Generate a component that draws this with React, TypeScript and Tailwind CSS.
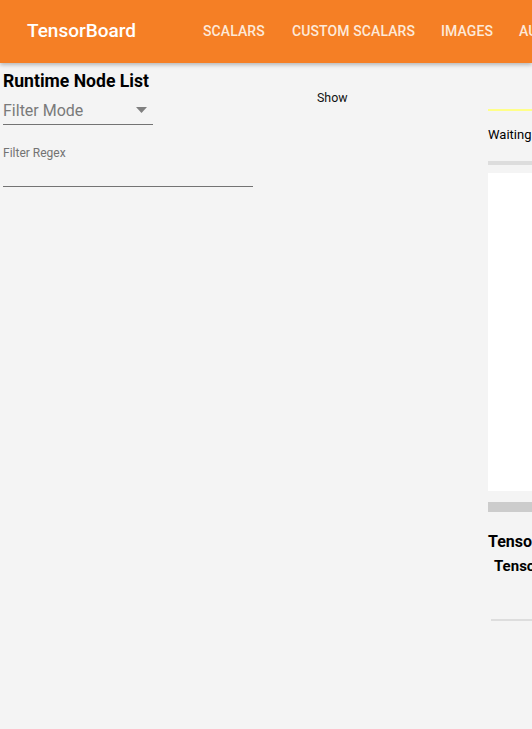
import React from "react";

export default function App() {
  return (
    <div className="w-[532px] h-[729px] overflow-hidden bg-[#f4f4f4]" style={{ fontFamily: "Roboto, 'Liberation Sans', sans-serif" }}>
      <header className="relative z-10 h-[63px] bg-[#f57f25] flex items-center shadow-[0_2px_4px_rgba(0,0,0,0.25)] whitespace-nowrap overflow-hidden">
        <div className="pl-[27px] text-white text-[19px] font-medium w-[203px] shrink-0">TensorBoard</div>
        <nav className="flex text-[14px] font-medium text-[#fde9d9] tracking-[0.1px]">
          <span className="w-[89px] shrink-0">SCALARS</span>
          <span className="w-[149px] shrink-0">CUSTOM SCALARS</span>
          <span className="w-[78px] shrink-0">IMAGES</span>
          <span className="shrink-0">AUDIO</span>
        </nav>
      </header>
      <div className="flex">
        <div className="w-[270px] shrink-0 pl-[3px] pt-[8px]">
          <div className="text-[17.6px] font-bold text-black leading-[20px]">Runtime Node List</div>
          <div className="relative w-[150px] h-[30px] border-b border-[#737373] mt-[4px]">
            <span className="absolute left-0 top-[6px] text-[16px] text-[#7a7a7a] leading-[20px]">Filter Mode</span>
            <svg className="absolute right-[6px] top-[12px]" width="11" height="6" viewBox="0 0 11 6">
              <path d="M0 0 L11 0 L5.5 6 Z" fill="#808080" />
            </svg>
          </div>
          <div className="mt-[21px] text-[12px] text-[#737373] leading-[14px]">Filter Regex</div>
          <div className="w-[250px] border-b border-[#737373] mt-[26px]" />
        </div>
        <div className="w-[218px] shrink-0 pt-[28px] pl-[47px] text-[12.4px] text-[#111] leading-[14px]">Show</div>
        <div className="flex-1 pt-[46px] min-w-0">
          <div className="h-[2px] bg-[#ffff88]" />
          <div className="mt-[16px] text-[13px] text-black leading-[16px] whitespace-nowrap">Waiting for data...</div>
          <div className="mt-[18px] h-[4px] bg-[#dddddd]" />
          <div className="mt-[8px] h-[318px] bg-white" />
          <div className="mt-[11px] h-[10px] bg-[#cccccc]" />
          <div className="mt-[20px] text-[16px] font-bold text-black leading-[20px] whitespace-nowrap">TensorBoard</div>
          <div className="mt-[5px] pl-[6px] text-[15px] font-bold text-black leading-[18px] whitespace-nowrap">TensorBoard</div>
          <div className="mt-[44px] ml-[3px] h-[2px] bg-[#dddddd]" />
        </div>
      </div>
    </div>
  );
}
